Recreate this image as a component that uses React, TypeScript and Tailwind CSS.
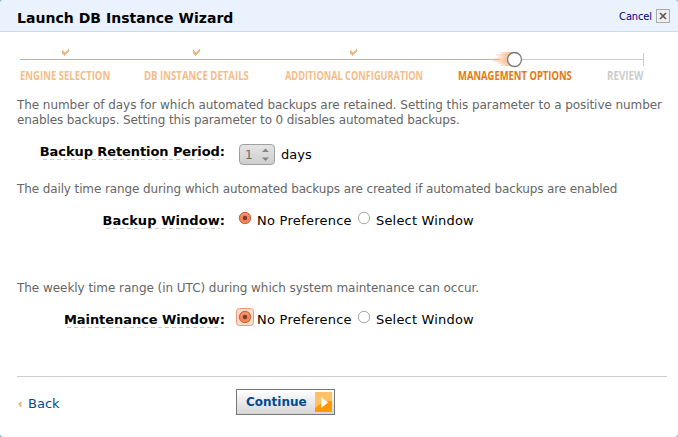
import React from "react";

const steps = [
  { label: "ENGINE SELECTION", box: "ml-5 w-[91px]", tone: "text-[#f4bd8a]", scale: "scale-x-[0.83]" },
  { label: "DB INSTANCE DETAILS", box: "ml-[33px] w-[106px]", tone: "text-[#f4bd8a]", scale: "scale-x-[0.835]" },
  { label: "ADDITIONAL CONFIGURATION", box: "ml-[35px] w-[139px]", tone: "text-[#f4bd8a]", scale: "scale-x-[0.8]" },
  { label: "MANAGEMENT OPTIONS", box: "ml-[34px] w-[115px]", tone: "text-[#e47911]", scale: "scale-x-[0.82]" },
  { label: "REVIEW", box: "ml-[34px] w-[38px]", tone: "text-[#cccccc]", scale: "scale-x-[0.85]" },
];

function Track() {
  return (
    <svg width="678" height="24" className="block" shapeRendering="crispEdges">
      <path d="M20 12.5H500" stroke="#eba66f" />
      <path d="M520 12.5H643" stroke="#cccccc" />
      <path d="M643.5 6V19" stroke="#cccccc" />
      {[62, 193, 350].map((x) => (
        <path
          key={x}
          transform={`translate(${x} 2)`}
          d="M0 1h1v1h1v1h2v-1h1v-1h1v-1h1v3h-1v1h-1v1h-1v1h-1v1h-1v-1h-1v-1h-1z"
          fill="#f0b985"
        />
      ))}
      <defs>
        <linearGradient id="trail">
          <stop offset="0" stopColor="#f4b680" stopOpacity=".2" />
          <stop offset="1" stopColor="#eea563" stopOpacity="1" />
        </linearGradient>
      </defs>
      {[[500, 5], [496, 7], [498, 9], [494, 11], [493, 13], [497, 15], [500, 17]].map(([x, y]) => (
        <rect key={y} x={x} y={y} width={514 - x} height="2" fill="url(#trail)" />
      ))}
      <circle cx="514.5" cy="12.5" r="7" fill="#fff" stroke="#777" strokeWidth="1.3" shapeRendering="auto" />
    </svg>
  );
}

function Label({ children, tracking }: { children: string; tracking: string }) {
  return (
    <div className="flex w-[225px] shrink-0 justify-end text-[13px] leading-4 font-bold">
      <div className={`h-[17px] whitespace-nowrap ${tracking}`}>
        {children}
        <div className="-mt-px ml-[3px] h-px bg-[repeating-linear-gradient(90deg,#ccc_0_4px,transparent_4px_7px)]" />
      </div>
      <span>:</span>
    </div>
  );
}

function Radio({ checked, focus }: { checked?: boolean; focus?: boolean }) {
  return (
    <svg width="18" height="18" className="block shrink-0">
      {focus && <rect x=".5" y=".5" width="17" height="17" rx="3" fill="#fbdccf" stroke="#ee9777" />}
      <circle cx="9" cy="9" r="5.7" fill={checked ? "#f38358" : "#fff"} stroke={checked ? "#c8613d" : "#aaa6a1"} />
      {checked && <path d="M5 7Q9 3 13 7" fill="none" stroke="#f9a37f" />}
      {checked && <circle cx="9" cy="9" r="2.2" fill="#73402e" />}
    </svg>
  );
}

function Choices({ focus }: { focus?: boolean }) {
  return (
    <div className="-mt-px flex pl-[11px] text-[13px] leading-4">
      <Radio checked focus={focus} />
      <span className="w-[101px] pt-1 pl-[3px] tracking-[0.26px] whitespace-nowrap">No Preference</span>
      <Radio />
      <span className="pt-1 pl-[3px] tracking-[0.18px] whitespace-nowrap">Select Window</span>
    </div>
  );
}

export default function App() {
  return (
    <div className="h-[437px] w-[678px] overflow-hidden bg-[#8fb4cf] font-['DejaVu_Sans',sans-serif] text-black">
      <div className="flex h-full flex-col overflow-hidden rounded-[4px] bg-white">
        <header className="flex h-8 shrink-0 justify-between border-b border-[#c5ddf0] bg-[#eaf2fe] pr-2 pl-[17px]">
          <h1 className="pt-[9px] text-[14px] leading-[18px] font-bold tracking-[0.03px] whitespace-nowrap">
            Launch DB Instance Wizard
          </h1>
          <div className="flex pt-[9px] text-[11px] leading-4 text-[#000080]">
            <span className="mr-1 font-['DejaVu_Sans_Condensed','DejaVu_Sans',sans-serif] tracking-[-0.1px] [font-stretch:semi-condensed]">
              Cancel
            </span>
            <svg width="14" height="14">
              <rect x=".5" y=".5" width="13" height="13" fill="#eee" stroke="#aaa" />
              <path d="M4 4l6 6M10 4l-6 6" stroke="#555" strokeWidth="1.6" />
            </svg>
          </div>
        </header>

        <div className="h-[66px] shrink-0 pt-[15px]">
          <Track />
          <div className="-mt-[3px] flex font-['Open_Sans',sans-serif] text-[11.5px] leading-4 font-bold">
            {steps.map((s) => (
              <div key={s.label} className={`shrink-0 ${s.box} ${s.tone}`}>
                <span className={`block origin-left whitespace-nowrap ${s.scale}`}>{s.label}</span>
              </div>
            ))}
          </div>
        </div>

        <p className="h-[46px] shrink-0 pl-[17px] text-xs leading-[15px] whitespace-nowrap text-[#666]">
          <span className="tracking-[-0.065px]">
            The number of days for which automated backups are retained. Setting this parameter to a positive number
          </span>
          <br />
          <span className="tracking-[-0.115px]">
            enables backups. Setting this parameter to 0 disables automated backups.
          </span>
        </p>

        <div className="flex h-[38px] shrink-0">
          <Label tracking="tracking-[-0.09px]">Backup Retention Period</Label>
          <div className="ml-[14px] flex h-[21px] w-9 shrink-0 items-center justify-between rounded-[4px] border border-[#a0a0a0] bg-linear-to-b from-[#e4e4e4] to-[#cecece] px-[5px] text-xs text-[#6f6a65]">
            <span>1</span>
            <svg width="7" height="13">
              <path d="M0 4L3.5 .5L7 4zM0 9.5L3.5 13L7 9.5z" fill="#858585" />
            </svg>
          </div>
          <span className="pt-[3px] pl-[6px] text-[13px] leading-4">days</span>
        </div>

        <p className="h-[28px] shrink-0 pl-[17px] text-xs leading-[15px] tracking-[-0.115px] whitespace-nowrap text-[#666]">
          The daily time range during which automated backups are created if automated backups are enabled
        </p>
        <div className="flex h-[71px] shrink-0">
          <div className="pt-[3px]">
            <Label tracking="tracking-[0.06px]">Backup Window</Label>
          </div>
          <Choices />
        </div>

        <p className="h-[28px] shrink-0 pl-[17px] text-xs leading-[15px] tracking-[-0.045px] whitespace-nowrap text-[#666]">
          The weekly time range (in UTC) during which system maintenance can occur.
        </p>
        <div className="flex h-[67px] shrink-0">
          <div className="pt-[3px]">
            <Label tracking="tracking-[-0.07px]">Maintenance Window</Label>
          </div>
          <Choices focus />
        </div>

        <footer className="mr-[11px] ml-[17px] flex h-[61px] shrink-0 border-t border-[#ccc] pt-3 text-[#004b91]">
          <div className="flex w-[219px] pt-[7px] text-[13px] leading-4">
            <svg width="11" height="16">
              <path d="M4.5 6L2.2 8.2L4.5 10.5" fill="none" stroke="#f5a252" strokeWidth="1.4" />
            </svg>
            <span>Back</span>
          </div>
          <button className="flex h-[26px] w-[99px] items-center justify-between border border-[#777] bg-linear-to-b from-white to-[#d6d6d6] pr-[2px] pl-[9px] text-xs font-bold">
            <span>Continue</span>
            <svg width="17" height="20">
              <rect width="17" height="20" fill="#ff9900" />
              <path d="M0 0H17V9Q8 8 0 16z" fill="#ffc166" />
              <path d="M6 5L13 10.5L6 16z" fill="#fff" />
            </svg>
          </button>
        </footer>
      </div>
    </div>
  );
}
